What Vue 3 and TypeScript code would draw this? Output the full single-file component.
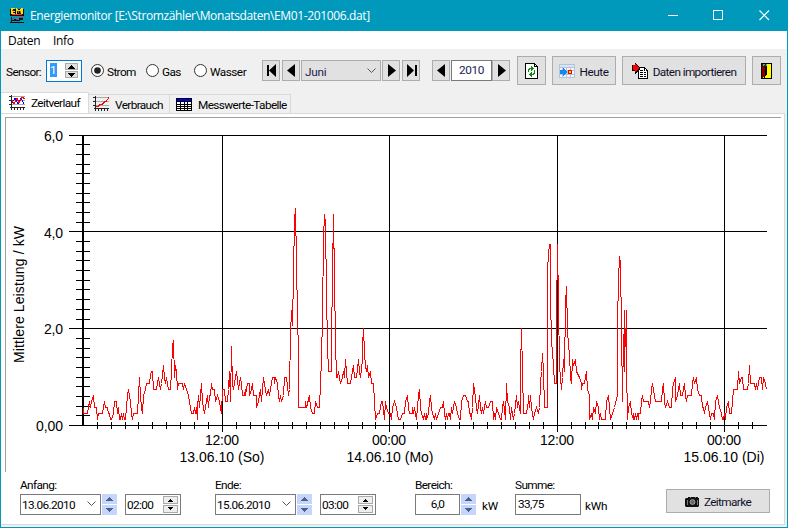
<script setup lang="ts">
interface Segment {
  origin: number
  data: string
}

const tabs = [
  { id: 'time', label: 'Zeitverlauf' },
  { id: 'usage', label: 'Verbrauch' },
  { id: 'table', label: 'Messwerte-Tabelle' },
]
const media = ['Strom', 'Gas', 'Wasser']
const periods = [
  { label: 'Anfang:', date: '13.06.2010', time: '02:00' },
  { label: 'Ende:', date: '15.06.2010', time: '03:00' },
]

// Each pair is "offset level": offset in thirds of a pixel, level in 1/8 kW.
const segments: Segment[] = [
  { origin: 70, data: '40 3,41 2,52 2,56 3,58 4,61 3,64 4,70 5,72 3,79 3,82 1,85 2,96 2,99 3,103 4,106 3,112 3,115 2,119 2,122 1,125 1,129 2,133 4,138 4,142 2,145 3,148 1,152 1,155 2,157 1,161 2,163 1,166 1,168 3,172 5,175 6,178 5,181 4,184 2,187 1,190 2,202 2,205 5,208 8,211 5,214 3,217 2,221 5,226 6,230 7,237 7,241 8.5,244 9,247 9,251 6,258 6,262 7,265 8,270 6,274 7,280 10,283 8,286 7,290 8,295 6,302 6,304 9,307 13,310 14,313 8,316 10,318 9,322 6,326 7,338 7,340 6,344 7,348 6,354 5,358 4,364 2,371 2,374 3,377 2,379 3,381 1,383 3,385 5,388 3,391 5,394 7,398 4,403 2,407 3,412 5,415 3,418 5,422 5,424 7,427 6,432 6,437 4,442 5,447 4,452 3,455 2,458 6,462 6,466 4,471 4,474 6,478 9,481 4,484 13,487 7,490 6,494 7,499 9,504 6,507 7,511 8,515 7,517 5,522 5,525 6,527 5,532 7,538 7' },
  { origin: 240, data: '29 5,33 6,37 7,41 5,48 5,50 3,54 4,60 6,65 4,71 8,75 6,79 5,85 6,89 5,94 7,97 8,102 8,104 7,106 8,112 7,114 5,118 4,121 5,125 4,129 5,133 8,139 8,144 5,148 6,151 15,154 19,157 16.5,160 25,163 34,166 36,169 27,172 18,174 12,175 3,195 3,197 4,200 3,207 5,211 3,217 2,222 2,226 4,232 3,238 3,241 7,245 11,247 18,250 31,253 35,256 33.5,259 22,262 13,265 9,273 9,275 14,277 25,280 35,283 24,286 14,289 8,292 8,295 9,301 7,307 8,309 9,312 8,317 11,321 7,331 7,334 8,340 10,344 8,350 8,354 11,358 9,362 8,366 11,368 13,370 16,373 12,376 10,379 9,382 10,386 8,390 9,394 7,401 7,403 4,406 1,411 2,418 2,421 3,425 4,428 4,432 1,435 4,439 3,444 2,450 2,453 1,458 3,462 4,468 3,472 2,475 1,482 1,486 2,492 2,496 4,502 5,504 3,509 2' },
  { origin: 410, data: '0 2,6 2,8 3,11 2,14 3,18 1,22 3,24 5,28 6,31 3,35 2,39 1,43 2,46 1,48 2,50 1,55 2,58 4,61 5,64 3,68 2,72 1,76 2,79 1,85 2,91 3,97 3,101 4,104 2,107 1,109 2,112 1,116 2,119 2,122 1,124 3,128 2,130 3,134 4,139 3,143 2,147 1,152 1,155 4,160 5,166 5,171 4,175 4,177 2,181 2,184 1,187 3,190 7,194 6,198 3,202 2,207 5,212 3,214 2,217 3,221 2,226 4,230 3,236 3,240 4,248 4,251 1,254 2,257 1,260 3,265 2,270 1,274 1,277 3,281 4,285 1,289 7,293 4,297 3,300 1,305 3,309 1,313 2,318 5,323 3,325 4,328 3,331 2,332 9,334 16,337 9,339 2,349 2,354 4,356 5,359 3,361 5,365 3,370 1,374 2,379 3,384 2,388 3,391 7,394 9,397 12,401 9,404 3,411 3,412 20,413 25.5,415 28.5,418 30,420 30,422 21,425 14,429 10,433 7,438 7,440 18,443 30,446 20,449 10,454 6,458 8,460 11,463 9,466 20,469 23,472 16,475 13,478 12,481 8,484 7,487 11,491 10,496 11,500 9,508 8,513 7' },
  { origin: 580, data: '5 6,8 7,13 7,16 8,20 9,23 6,27 5,29 1,33 2,37 1,41 3,45 2,50 4,54 3,56 3,59 1,62 2,65 1,77 1,80 4,86 5,89 3,92 1,98 2,104 3,111 5,113 17,115 24,118 28,121 27,124 16,127 4,130 15,132 9,134 19,136 13,138 19,140 10,142 1,145 3,151 4,154 2,159 1,161 2,163 1,166 2,169 1,172 2,174 1,176 2,182 2,184 4,187 5,191 4,204 4,207 3,211 4,214 6,218 7,222 5,226 4,244 4,247 6,250 7,254 4,257 3,262 4,268 3,274 3,278 6,281 7,285 8,287 4,292 5,298 7,301 5,307 5,312 7,316 5,319 4,323 5,333 5,337 7,341 8,344 7,349 8,352 6,358 5,363 5,366 3,370 3,372 2,377 3,381 4,386 3,391 1,393 2,401 2,403 1,407 4,412 5,417 3,423 2,426 1,431 1,433 2,435 1,440 3,445 4,448 2,453 2,457 4,460 6,471 6,475 9,479 7,484 8,487 8,490 6,501 6,505 7,508 10,511 7,523 7,526 6,529 7,532 6,536 7,539 8,543 8,546 6,551 8,556 7,559 6' },
]

// Chart space starts at x 6, y 118 of the window.
const curve = segments
  .flatMap((s) =>
    s.data.split(',').map((pair) => {
      const [offset, level] = pair.split(' ').map(Number)
      const x = Math.floor(s.origin + offset / 3) - 6 + 0.5
      const y = Math.round(425 - level * 6.04) - 118 + 0.5
      return `${x},${y}`
    }),
  )
  .join(' ')

const yTicks = Array.from({ length: 31 }, (_, i) => ({
  y: Math.round(307 - i * 9.68) + 0.5,
  major: i % 10 === 0,
}))
const xTicks = Array.from({ length: 49 }, (_, i) => ({
  x: Math.floor(77.2 + i * 13.94) + 0.5,
  major: i % 12 === 10,
}))
const yLabels = [
  { text: '6,0', y: 23, w: 19 },
  { text: '4,0', y: 120, w: 19 },
  { text: '2,0', y: 216, w: 19 },
  { text: '0,00', y: 313, w: 27 },
]
const xLabels = [
  { time: '12:00', tx: 199, date: '13.06.10 (So)', dx: 173.5, w: 85 },
  { time: '00:00', tx: 366, date: '14.06.10 (Mo)', dx: 340.5, w: 87 },
  { time: '12:00', tx: 534, date: '', dx: 0, w: 0 },
  { time: '00:00', tx: 701, date: '15.06.10 (Di)', dx: 677.5, w: 81 },
]
</script>

<template>
  <div class="window">
    <header class="titlebar">
      <svg class="app-icon" width="16" height="16" shape-rendering="crispEdges">
        <path d="M1 1h14v7H1z" fill="#111" />
        <path d="M2 0h4v1H4v2h2v1H4v1h2v1H2zM7 0h1v6H7zM8 1h1v2H8zM9 2h2v1H9zM11 1h1v2h-1zM12 0h2v6h-2z" fill="#ffe000" />
        <path d="M3 2h1v1H3zM9 3h1v2H9zM11 3h1v2h-1zM3 6h10v1H3z" fill="#f33" />
        <path d="M2 9h1v5H2zM3 12h2v-1h2v1h3v-2h4v2h-3v1H3zM1 14h14v1H1z" fill="#111" />
        <path d="M4 10h2v1H4zM7 11h2v1H7zM10 9h4v1h-4z" fill="#e22" />
      </svg>
      <span class="title">Energiemonitor [E:\Stromzähler\Monatsdaten\EM01-201006.dat]</span>
      <svg class="caption" width="102" height="12" fill="none" stroke="#fff">
        <path d="M0 6.5h10M45.5 1.5h9v9h-9z" shape-rendering="crispEdges" />
        <path d="M91.5 1.5l9.500 9.500M101 1.500l-9.500 9.500" stroke-width="1.200" />
      </svg>
    </header>

    <nav class="menu"><span class="daten">Daten</span><span>Info</span></nav>

    <div class="toolbar">
      <span class="sensor">Sensor:</span>
      <div class="sensor-box">
        <span class="sel">1</span>
        <svg width="13" height="15" shape-rendering="crispEdges">
          <path d="M.5.5h12v6H.5zM.5 8.500h12v6H.5z" fill="#e1e1e1" stroke="#aaa" />
          <path d="M6 2h1v1h1v1h1v1h1v1H3V5h1V4h1V3h1zM3 10h7v1H9v1H8v1H7v1H6v-1H5v-1H4v-1H3z" fill="#000" />
        </svg>
      </div>
      <div class="radios">
        <label v-for="(m, i) in media" :key="m" :class="['radio', m.toLowerCase()]">
          <svg width="13" height="13">
            <circle cx="6.500" cy="6.500" r="6" fill="#fff" stroke="#333" />
            <circle v-if="i === 0" cx="6.500" cy="6.500" r="3.300" fill="#222" />
          </svg>
          <span>{{ m }}</span>
        </label>
      </div>

      <div class="months">
        <div class="nav first"><svg width="18" height="21"><path d="M5 5h2v11H5zM14 4v13l-7-6.500z" /></svg></div>
        <div class="nav"><svg width="18" height="21"><path d="M13 4v13L5 10.500z" /></svg></div>
        <div class="combo">
          <span>Juni</span>
          <svg width="9" height="6"><path d="M.5.5l4 4 4-4" fill="none" stroke="#555" /></svg>
        </div>
        <div class="nav"><svg width="18" height="21"><path d="M6 4v13l8-6.500z" /></svg></div>
        <div class="nav last"><svg width="18" height="21"><path d="M13 5h2v11h-2zM5 4v13l7-6.500z" /></svg></div>
      </div>
      <div class="years">
        <div class="nav"><svg width="18" height="21"><path d="M13 4v13L5 10.500z" /></svg></div>
        <div class="year">2010</div>
        <div class="nav"><svg width="18" height="21"><path d="M6 4v13l8-6.500z" /></svg></div>
      </div>

      <div class="actions">
        <button class="square">
          <svg width="14" height="16" shape-rendering="crispEdges">
            <path d="M.5.5h9l3 3v12H.5z" fill="#fff" stroke="#000" />
            <path d="M9.500.5v3h3" fill="none" stroke="#000" />
            <path d="M6 3h1v1h1v1h1v1H8v1H7v1H6V6H5v1H4v1H3V6h1V5h2zM9 7h1v4H9v1H7v2H6v-1H5v-1H4v-1h1v-1h1V9h1v2h1v-1h1zM3 8h1v1H3z" fill="#0a8a0a" />
          </svg>
        </button>
        <button class="today">
          <svg width="16" height="14" shape-rendering="crispEdges">
            <path d="M0 0h16v14H0z" fill="#b4c4da" />
            <path d="M1 1h14v2H1z" fill="#d8e6f4" />
            <path d="M1 4h2v2H1zM4 4h3v2H4zM8 4h3v2H8zM12 4h3v2h-3zM1 11h2v2H1zM4 11h3v2H4zM8 11h3v2H8zM12 11h3v2h-3zM13 7h2v3h-2z" fill="#f5f7fa" />
            <path d="M1 6h3V4h1v1h1v1h1v1h1v2H7v1H6v1H5v1H4v-2H1z" fill="#1687ee" />
            <path d="M9.500 6.500h3v3h-3z" fill="#fff200" stroke="#f00" />
          </svg>
          <span>Heute</span>
        </button>
        <button class="import">
          <svg width="17" height="16" shape-rendering="crispEdges">
            <path d="M6.500 4.500h6l3 3v8h-9z" fill="#fff" stroke="#000" />
            <path d="M12.500 4.500v3h3M8 7.500h3M8 9.500h6M8 11.500h6M8 13.500h6" fill="none" stroke="#000" stroke-dasharray="3 1" />
            <path d="M0 2h3V0h1v1h1v1h1v1h1v1h1v3H7v1H6v1H5v1H4v1H3V8H0z" fill="#000" />
            <path d="M1 2h2V1h1v1h1v1h1v1h1v2H6v1H5v1H4v1H3V7H1z" fill="#f00" />
          </svg>
          <span>Daten importieren</span>
        </button>
        <button class="square">
          <svg width="11" height="16" shape-rendering="crispEdges">
            <path d="M.5.5h10v15H.5z" fill="#ff0" stroke="#000" />
            <path d="M1 1h4v1h1v10H5v1H4v1H2v1H1z" fill="#800000" />
            <path d="M5 3h1v9H5v1H4v2H3v-2h1V4h1z" fill="#000" />
            <path d="M2 1h2v1H3v1H2zM5 1h1v2H5z" fill="#0cc" />
          </svg>
        </button>
      </div>
    </div>

    <div class="tabs">
      <div v-for="(tab, i) in tabs" :key="tab.id" :class="['tab', tab.id, { active: i === 0 }]">
        <svg v-if="tab.id !== 'table'" width="16" height="16" shape-rendering="crispEdges" fill="none">
          <path d="M3 1.500h13M3 5.500h13M3 9.500h13" stroke="#aaa" />
          <path d="M2.500 0v15M0 1.500h2M0 5.500h2M0 9.500h2M1 12.500h15M5.500 12v3M8.500 12v3M11.500 12v3M14.500 12v3" stroke="#222" />
          <template v-if="tab.id === 'time'">
            <path d="M3 8l3-5 3 6 3-6 3 6" stroke="#00f" />
            <path d="M3 5l2 4 3-6 2 5 3-6 3 2" stroke="#f00" />
          </template>
          <path v-else d="M3 10.500h2l2-2h2l3-3h1l3-4" stroke="#f00" />
        </svg>
        <svg v-else width="16" height="13" shape-rendering="crispEdges">
          <path d="M0 0h16v13H0z" fill="#000" />
          <path d="M1 1h14v2H1z" fill="#00e" />
          <path d="M1 4h3v2H1zM5 4h3v2H5zM9 4h2v2H9zM12 4h3v2h-3zM1 7h3v1H1zM5 7h3v1H5zM9 7h2v1H9zM12 7h3v1h-3zM1 9h3v1H1zM5 9h3v1H5zM9 9h2v1H9zM12 9h3v1h-3zM1 11h3v1H1zM5 11h3v1H5zM9 11h2v1H9zM12 11h3v1h-3z" fill="#fff" />
        </svg>
        <span>{{ tab.label }}</span>
      </div>
    </div>

    <main class="page">
      <div class="chart">
        <svg width="776" height="354">
          <g shape-rendering="crispEdges" stroke="#000" fill="none">
            <path d="M77 17v291" stroke-width="2" />
            <template v-for="t in yTicks" :key="t.y">
              <path v-if="t.major" :d="`M63 ${t.y}H761`" />
              <path v-else :d="`M70 ${t.y}H84`" />
            </template>
            <template v-for="t in xTicks" :key="t.x">
              <path v-if="t.major" :d="`M${t.x} 17V314`" />
              <path v-else-if="t.x > 80" :d="`M${t.x} 304V311`" />
            </template>
            <polyline :points="curve" stroke="#f00" />
          </g>
          <g class="axis-text">
            <text
              v-for="l in yLabels"
              :key="l.text"
              :x="57 - l.w"
              :y="l.y"
              :textLength="l.w"
            >{{ l.text }}</text>
            <template v-for="(l, i) in xLabels" :key="i">
              <text :x="l.tx" y="326.500" textLength="34">{{ l.time }}</text>
              <text v-if="l.date" :x="l.dx" y="344" :textLength="l.w">{{ l.date }}</text>
            </template>
            <text transform="translate(18 245) rotate(-90)" textLength="137">Mittlere Leistung / kW</text>
          </g>
        </svg>
      </div>

      <footer class="controls">
        <div v-for="p in periods" :key="p.label" class="group period">
          <span class="caption-text">{{ p.label }}</span>
          <div class="row">
            <div class="field date">
              <span>{{ p.date }}</span>
              <svg width="9" height="6"><path d="M.5.5l4 4 4-4" fill="none" stroke="#555" /></svg>
            </div>
            <svg class="blue" width="15" height="21" shape-rendering="crispEdges">
              <path d="M0 0h15v10H0zM0 11h15v10H0z" fill="#c6d5fc" />
              <path d="M7 3h1v1h1v1h1v1h1v1H4V6h1V5h1V4h1zM4 14h7v1h-1v1H9v1H8v1H7v-1H6v-1H5v-1H4z" fill="#4d6185" />
            </svg>
            <div class="field time-field">
              <span>{{ p.time }}</span>
              <svg width="15" height="17" shape-rendering="crispEdges">
                <path d="M.5.5h14v7H.5zM.5 9.500h14v7H.5z" fill="#eee" stroke="#aaa" />
                <path d="M7 3h1v1h1v1h1v1H5V5h1V4h1zM5 11h5v1H9v1H8v1H7v-1H6v-1H5z" fill="#000" />
              </svg>
            </div>
          </div>
        </div>
        <div class="group range">
          <span class="caption-text">Bereich:</span>
          <div class="row">
            <div class="field power">6,0</div>
            <svg class="blue" width="15" height="21" shape-rendering="crispEdges">
              <path d="M0 0h15v10H0zM0 11h15v10H0z" fill="#c6d5fc" />
              <path d="M7 3h1v1h1v1h1v1h1v1H4V6h1V5h1V4h1zM4 14h7v1h-1v1H9v1H8v1H7v-1H6v-1H5v-1H4z" fill="#4d6185" />
            </svg>
            <span class="unit">kW</span>
          </div>
        </div>
        <div class="group sum">
          <span class="caption-text">Summe:</span>
          <div class="row">
            <div class="field total">33,75</div>
            <span class="unit kwh">kWh</span>
          </div>
        </div>
        <button class="mark">
          <svg width="14" height="11">
            <path d="M1 2h2V1h2v1l1-1h4l1 1V1h2v1h1v8l-1 1H1l-1-1V3z" fill="#111" />
            <circle cx="7.500" cy="6" r="2.500" fill="#667" stroke="#bbb" stroke-width=".7" />
            <path d="M2.500 4v5M12.500 4v5" stroke="#aaa" stroke-width=".7" />
          </svg>
          <span>Zeitmarke</span>
        </button>
      </footer>
    </main>
  </div>
</template>

<style>
body {
  margin: 0;
  overflow: hidden;
}
</style>

<style scoped>
* {
  box-sizing: border-box;
}
svg {
  display: block;
  flex: none;
}
.window {
  width: 788px;
  height: 528px;
  border: 1px solid #0099bc;
  background: #f0f0f0;
  display: flex;
  flex-direction: column;
  font: 12px/16px 'Open Sans', 'Noto Sans', sans-serif;
  color: #000;
  white-space: nowrap;
}
.titlebar {
  height: 30px;
  flex: none;
  background: #0099bc;
  color: #fff;
  display: flex;
  align-items: center;
  padding: 0 17px 0 8px;
}
.app-icon {
  margin-top: -1px;
}
.title {
  margin-left: 5px;
  letter-spacing: -0.37px;
}
.caption {
  margin-left: auto;
  margin-top: -2px;
}
.menu {
  height: 18px;
  flex: none;
  background: #fff;
  display: flex;
  padding-left: 7px;
  line-height: 20px;
  letter-spacing: -0.3px;
}
.daten {
  width: 45px;
}
.toolbar,
.tabs,
.controls {
  font-family: Roboto, sans-serif;
  font-size: 11.8px;
  letter-spacing: -0.62px;
}
.toolbar {
  height: 43px;
  flex: none;
  display: flex;
  align-items: center;
  padding-left: 5px;
}
.sensor {
  width: 40px;
  padding-top: 2px;
}
.sensor-box {
  width: 36px;
  height: 22px;
  border: 1px solid #0078d7;
  background: #fff;
  display: flex;
  justify-content: space-between;
  padding: 2px 3px;
}
.sel {
  width: 7px;
  height: 14px;
  line-height: 14px;
  background: #3399ff;
  color: #fff;
}
.radios {
  display: flex;
  margin-left: 9px;
  width: 171px;
}
.radio {
  display: flex;
  align-items: center;
  gap: 3px;
}
.radio span {
  padding-top: 2px;
}
.strom {
  width: 55px;
}
.gas {
  width: 48px;
}
.wasser {
  letter-spacing: -0.5px;
}
.months,
.years {
  display: flex;
  gap: 1px;
}
.first {
  margin-right: 1px;
}
.last {
  margin-left: 1px;
}
.years {
  margin-left: 12px;
  gap: 0;
}
.years .year {
  margin-left: 1px;
}
.nav {
  width: 18px;
  height: 21px;
  background: #e1e1e1;
  border: 1px solid #adadad;
}
.nav svg {
  margin: -1px;
}
.combo {
  width: 80px;
  height: 21px;
  border: 1px solid #adadad;
  background: #e1e1e1;
  color: #1c1c50;
  display: flex;
  align-items: center;
  justify-content: space-between;
  padding: 0 4px 0 3px;
  letter-spacing: -0.3px;
}
.combo span {
  padding-top: 2px;
}
.year {
  width: 41px;
  height: 21px;
  border: 1px solid #7a7a7a;
  background: #fff;
  text-align: center;
  line-height: 19px;
  color: #1c1c50;
  letter-spacing: -0.4px;
}
.actions {
  display: flex;
  gap: 6px;
  margin-left: 7px;
}
button {
  height: 29px;
  border: 1px solid #adadad;
  background: #e1e1e1;
  display: flex;
  align-items: center;
  justify-content: center;
  padding: 0;
  gap: 4px;
  font: inherit;
  letter-spacing: inherit;
  color: #10102c;
}
button span {
  padding-top: 2px;
}
.square {
  width: 29px;
}
.today {
  width: 64px;
}
.today span {
  letter-spacing: -0.45px;
}
.import {
  width: 124px;
}
.tabs {
  height: 21px;
  flex: none;
  display: flex;
  align-items: flex-end;
}
.tab {
  height: 19px;
  border: 1px solid #d9d9d9;
  border-left: 0;
  border-bottom: 0;
  display: flex;
  align-items: center;
  gap: 6px;
  padding-left: 4px;
}
.tab span {
  padding-top: 2px;
}
.tab.time {
  width: 88px;
  height: 21px;
  background: #fff;
  padding-left: 8px;
}
.time span {
  padding: 0;
}
.usage {
  width: 81px;
}
.table {
  width: 121px;
  padding-left: 6px;
}
.page {
  width: 784px;
  height: 412px;
  flex: none;
  border-right: 1px solid #d9d9d9;
  border-bottom: 1px solid #d9d9d9;
  border-top: 1px solid #d9d9d9;
  background: #fff;
  padding: 3px 3px 0 4px;
}
.chart {
  height: 355px;
  border-top: 1px solid #a0a0a0;
  border-left: 1px solid #a0a0a0;
}
.axis-text {
  font: 14px 'Liberation Sans', sans-serif;
  letter-spacing: 0;
  fill: #000;
}
.controls {
  display: flex;
  align-items: flex-start;
  padding: 5px 0 0 15px;
}
.group {
  display: flex;
  flex-direction: column;
}
.period {
  width: 195px;
}
.range {
  width: 100px;
  margin-left: 5px;
}
.sum {
  width: 151px;
}
.row {
  display: flex;
  align-items: center;
  height: 22px;
}
.field {
  height: 21px;
  border: 1px solid #7a7a7a;
  background: #fff;
  display: flex;
  align-items: center;
  justify-content: space-between;
}
.field span {
  padding-top: 1px;
}
.date {
  width: 81px;
  padding: 0 4px 0 1px;
}
.blue {
  margin-left: 1px;
}
.time-field {
  width: 56px;
  margin-left: 8px;
  padding: 0 2px 0 1px;
}
.power {
  width: 45px;
  padding-bottom: 1px;
  justify-content: center;
}
.total {
  width: 66px;
  padding: 0 2px 1px;
}
.unit {
  margin-left: 6px;
  padding-top: 4px;
  letter-spacing: -0.2px;
}
.kwh {
  margin-left: 4px;
}
.mark {
  width: 104px;
  height: 24px;
  margin-top: 12px;
  gap: 5px;
}
</style>
